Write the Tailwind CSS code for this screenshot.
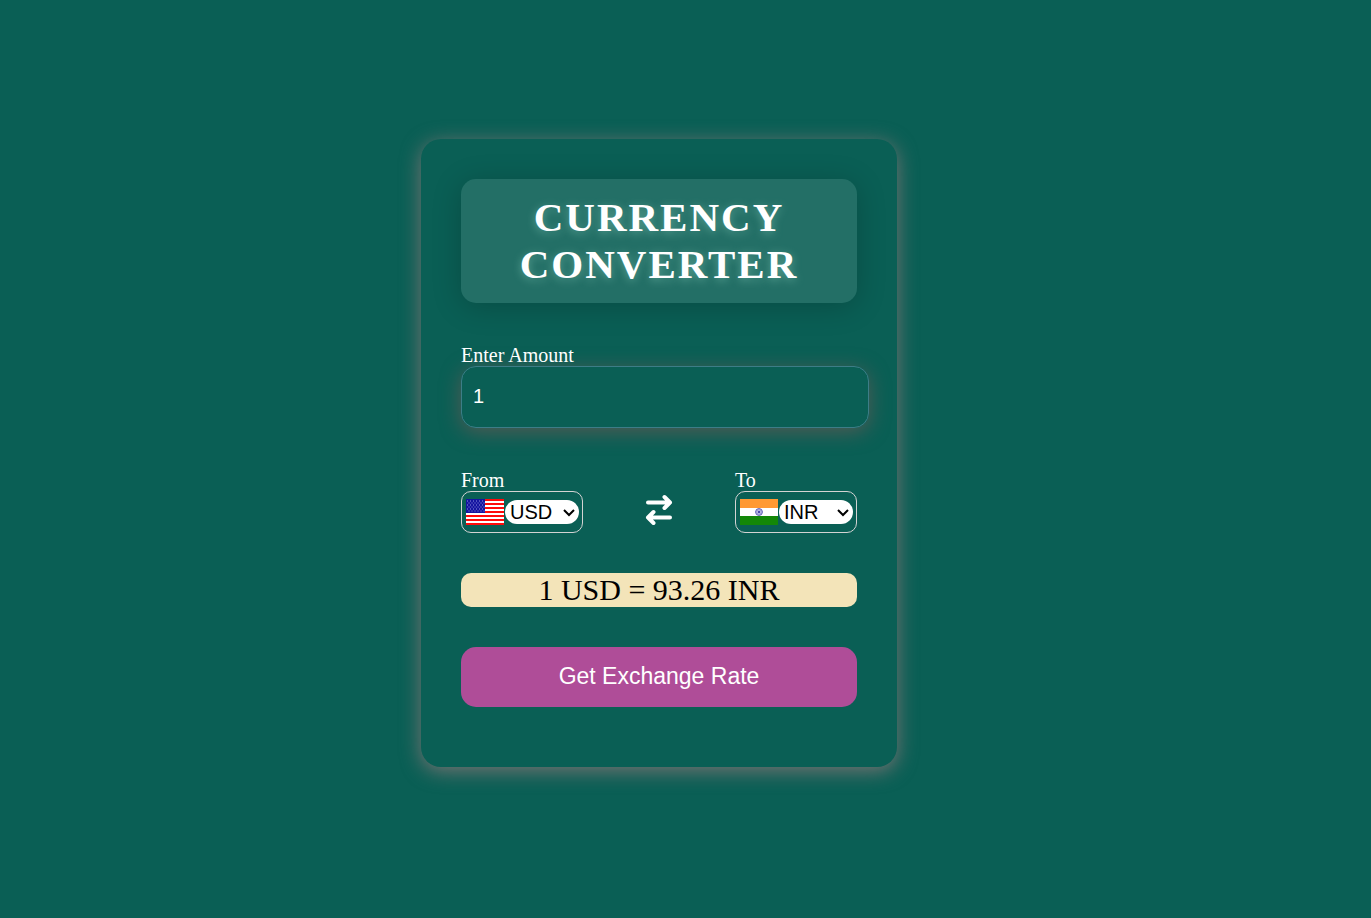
<!DOCTYPE html>
<html lang="en">
<head>
  <meta charset="UTF-8">
  <meta name="viewport" content="width=device-width, initial-scale=1.0">
  <title>Currency Converter</title>
  <script src="https://cdn.jsdelivr.net/npm/@tailwindcss/browser@4"></script>
</head>
<body class="min-h-screen flex items-center justify-center pr-[53px] pb-3 bg-[#0a5f55] text-white font-['Liberation_Serif',serif]">
  <main class="w-full max-w-[476px] px-10 pt-10 pb-15 rounded-[20px] shadow-[0_4px_20px_#787272]">
    <h1 class="mb-10 p-[15px] rounded-[15px] bg-white/10 text-center text-[41px] leading-[47px] font-bold uppercase tracking-[2px] [text-shadow:0_2px_10px_rgba(158,225,205,0.45)] shadow-[0_4px_30px_rgba(0,0,0,0.2)]">
      Currency Converter
    </h1>

    <form>
      <!-- Amount -->
      <div class="mb-10">
        <label for="amount" class="block pt-px text-xl leading-[22px]">Enter Amount</label>
        <input
          id="amount"
          type="text"
          value="1"
          class="block w-[calc(100%+12px)] h-[62px] px-[11px] pb-0.5 rounded-[15px] border border-[#3d7d87] bg-transparent text-xl font-['Liberation_Sans',sans-serif] shadow-[0_4px_20px_#535a54] outline-none"
        >
      </div>

      <!-- Currencies -->
      <div class="mb-10 flex items-center justify-between">
        <div>
          <label for="from" class="block pt-px text-xl leading-[22px]">From</label>
          <div class="flex items-center w-[122px] h-[42px] px-1 rounded-[10px] border border-[#d3d3d3]">
            <svg class="w-[38px] h-[26px] mr-px shrink-0" viewBox="0 0 38 26" aria-hidden="true">
              <rect width="38" height="26" fill="#fff" />
              <path d="M0 1h38M0 5h38M0 9h38M0 13h38M0 17h38M0 21h38M0 25h38" stroke="#ff0a0a" stroke-width="2" />
              <rect width="19" height="14" fill="#1414a0" />
              <path d="M1 2h18M1 6h18M1 10h18" stroke="#8f8fe0" stroke-dasharray="1 2" />
              <path d="M2.500 4h17M2.500 8h17M2.500 12h17" stroke="#8f8fe0" stroke-dasharray="1 2" />
            </svg>
            <div class="relative shrink-0">
              <select id="from" class="block appearance-none w-[74px] h-6 pl-[5px] rounded-[15px] bg-white text-black text-xl leading-6 font-['Liberation_Sans',sans-serif] outline-none">
                <option selected>USD</option>
                <option>INR</option>
                <option>EUR</option>
              </select>
              <svg class="absolute right-1 top-2 w-3 h-2.5 pointer-events-none" viewBox="0 0 12 10" fill="none" stroke="#000" stroke-width="2" aria-hidden="true">
                <path d="M1 2l5 5 5-5" />
              </svg>
            </div>
          </div>
        </div>

        <button type="button" aria-label="Swap currencies" class="mt-[18px]">
          <svg class="w-7 h-8" viewBox="0 0 28 32" fill="none" stroke="#fff" stroke-width="4" stroke-linecap="round" stroke-linejoin="round" aria-hidden="true">
            <path d="M3 8.500h22M19.500 3l5.500 5.500-5.500 5.500M25 23.500H3M8.500 18L3 23.500 8.500 29" />
          </svg>
        </button>

        <div>
          <label for="to" class="block pt-px text-xl leading-[22px]">To</label>
          <div class="flex items-center w-[122px] h-[42px] px-1 rounded-[10px] border border-[#d3d3d3]">
            <svg class="w-[38px] h-[26px] mr-px shrink-0" viewBox="0 0 38 26" aria-hidden="true">
              <rect width="38" height="26" fill="#fff" />
              <rect width="38" height="9" fill="#ff9933" />
              <rect y="17" width="38" height="9" fill="#138808" />
              <circle cx="19" cy="13" r="3.400" fill="#c9c9ea" stroke="#5c5cb4" stroke-width="1" />
              <path d="M19 10v6M16 13h6M17 11l4 4M21 11l-4 4" stroke="#7777c4" stroke-width="0.500" />
              <circle cx="19" cy="13" r="1" fill="#3434a0" />
            </svg>
            <div class="relative shrink-0">
              <select id="to" class="block appearance-none w-[74px] h-6 pl-[5px] rounded-[15px] bg-white text-black text-xl leading-6 font-['Liberation_Sans',sans-serif] outline-none">
                <option>USD</option>
                <option selected>INR</option>
                <option>EUR</option>
              </select>
              <svg class="absolute right-1 top-2 w-3 h-2.5 pointer-events-none" viewBox="0 0 12 10" fill="none" stroke="#000" stroke-width="2" aria-hidden="true">
                <path d="M1 2l5 5 5-5" />
              </svg>
            </div>
          </div>
        </div>
      </div>

      <p class="mb-10 rounded-[10px] bg-[#f3e4b9] text-black text-center text-[30px] leading-[34px]">1 USD = 93.26 INR</p>

      <button type="submit" class="w-full h-15 pb-0.5 rounded-[15px] bg-[#af4d98] text-[23px] font-['Liberation_Sans',sans-serif] cursor-pointer">
        Get Exchange Rate
      </button>
    </form>
  </main>
</body>
</html>
